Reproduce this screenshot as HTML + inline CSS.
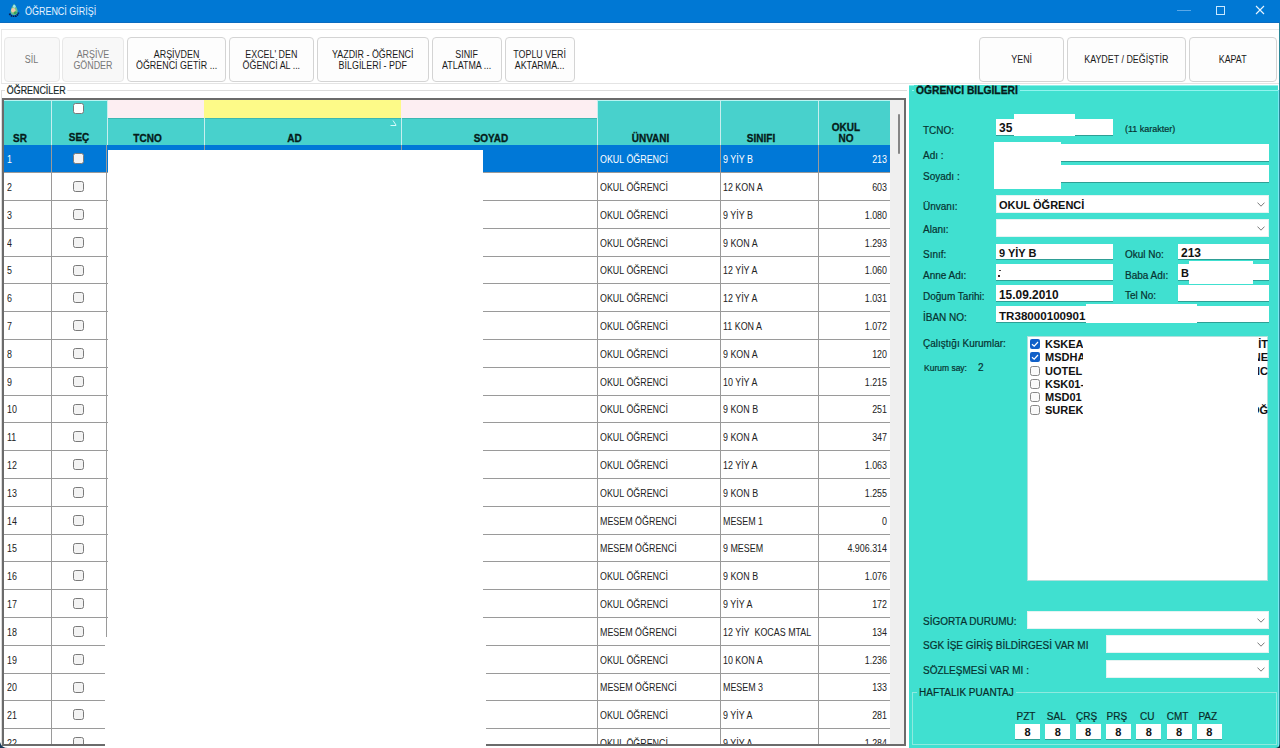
<!DOCTYPE html><html><head><meta charset="utf-8"><style>
*{margin:0;padding:0;box-sizing:border-box}
html,body{width:1280px;height:748px;overflow:hidden;background:#fff;font-family:"Liberation Sans",sans-serif;position:relative}
.a{position:absolute}
#title{left:0;top:0;width:1280px;height:23px;background:#0078d4}
#title .t{left:25px;top:5.5px;color:#e6f3ff;font-size:10.3px;white-space:nowrap;transform:scaleX(0.87);transform-origin:0 0}
.btn span{display:block;transform:scaleX(0.89)}
.btn{position:absolute;top:37px;height:45px;border:1px solid #d4d4d4;border-radius:4px;background:#fdfdfd;color:#1a1a1a;font-size:10px;line-height:11px;display:flex;align-items:center;justify-content:center;text-align:center;white-space:nowrap}
.btn.dis{color:#777;border-color:#e8e8e8;background:#f8f8f8}
.lbl{position:absolute;white-space:nowrap;font-size:10px;color:#073330;line-height:12px;-webkit-text-stroke:0.2px #073330}
.tb{position:absolute;background:#fff;border-bottom:1.5px solid #2e9f95}
.cb{position:absolute;background:#fff;border-bottom:1px solid #2aa79b}
.chev{position:absolute;width:6px;height:6px;border-right:1px solid #555;border-bottom:1px solid #555;transform:rotate(45deg)}
.cell{position:absolute;font-size:10px;color:#222;white-space:nowrap;line-height:12px;transform:scaleX(0.89);transform-origin:0 0}
.cell.r{transform-origin:100% 0}
.hl{position:absolute;background:#9a9a9a}
.chk{position:absolute;width:11px;height:11px;border:1px solid #7a7a7a;border-radius:2.5px;background:#f3f3f3}
.hdr{position:absolute;font-weight:bold;font-size:10px;color:#051c1a;-webkit-text-stroke:0.3px #051c1a;text-align:center;line-height:11px;white-space:nowrap}
</style></head><body>
<div id="title" class="a">
<svg class="a" style="left:8px;top:3px" width="12" height="14" viewBox="0 0 12 14"><path d="M1.5 10.5Q3 13.5 6 13.5Q9.5 13.5 10.5 9.5" stroke="#0a1a50" stroke-width="1.8" fill="none" stroke-dasharray="1.6 0.6"/><path d="M6 0.8Q9.8 5.5 9.6 8.6Q9.2 12 6 12Q2.6 12 2.6 8.6Q2.6 5.5 6 0.8Z" fill="#6cc08a"/><ellipse cx="5.3" cy="7.3" rx="2.2" ry="2.4" fill="#f0c8a8"/><ellipse cx="6.3" cy="3.3" rx="1.3" ry="1.6" fill="#9be4f4"/><ellipse cx="7.2" cy="9.8" rx="1.6" ry="1.4" fill="#3aa45a"/></svg>
<div class="a t">ÖĞRENCİ GİRİŞİ</div>
<div class="a" style="left:0;top:22px;width:1280px;height:1px;background:#0a6cc0"></div>
<div class="a" style="left:1177px;top:10px;width:14px;height:1px;background:#5aa8e8"></div>
<div class="a" style="left:1216px;top:6px;width:9px;height:9px;border:1px solid #c8e8ff"></div>
<svg class="a" style="left:1255px;top:5px" width="10" height="10" viewBox="0 0 10 10"><path d="M1 1L9 9M9 1L1 9" stroke="#e8f4ff" stroke-width="1.1"/></svg>
</div>
<div class="a" style="left:1px;top:29px;width:1279px;height:55px;border-top:1px solid #e8e8e8;border-left:1px solid #e8e8e8;border-bottom:1px solid #e4e4e4"></div>
<div class="btn dis" style="left:4px;width:56px"><span>SİL</span></div>
<div class="btn dis" style="left:62px;width:62px"><span>ARŞİVE<br>GÖNDER</span></div>
<div class="btn" style="left:127px;width:99px"><span>ARŞİVDEN<br>ÖĞRENCİ GETİR ...</span></div>
<div class="btn" style="left:229px;width:85px"><span>EXCEL' DEN<br>ÖĞENCİ AL ...</span></div>
<div class="btn" style="left:317px;width:112px"><span>YAZDIR - ÖĞRENCİ<br>BİLGİLERİ - PDF</span></div>
<div class="btn" style="left:432px;width:70px"><span>SINIF<br>ATLATMA ...</span></div>
<div class="btn" style="left:505px;width:70px"><span>TOPLU VERİ<br>AKTARMA...</span></div>
<div class="btn" style="left:979px;width:85px"><span>YENİ</span></div>
<div class="btn" style="left:1067px;width:119px"><span>KAYDET / DEĞİŞTİR</span></div>
<div class="btn" style="left:1189px;width:88px"><span>KAPAT</span></div>
<div class="a" style="left:1px;top:90px;width:906px;height:658px;border-top:1px solid #dcdcdc;border-left:1px solid #dcdcdc"></div>
<div class="lbl" style="left:5px;top:85px;background:#fff;padding:0 2px;font-size:10px;color:#222;transform:scaleX(0.89);transform-origin:0 0">ÖĞRENCİLER</div>
<div class="a" style="left:2px;top:98px;width:904px;height:648px;border:2px solid #6b6b6b;background:#fff;overflow:hidden">
<div class="a" style="left:0;top:0;width:886px;height:45px;background:#48d1cc"></div>
<div class="a" style="left:103px;top:0;width:97px;height:18px;background:#fdeef2"></div>
<div class="a" style="left:200px;top:0;width:197px;height:18px;background:#fdfa88"></div>
<div class="a" style="left:397px;top:0;width:196px;height:18px;background:#fdeef2"></div>
<div class="a" style="left:103px;top:18px;width:490px;height:1px;background:#3cb8b2"></div>
<div class="a" style="left:0;top:0;width:103px;height:1px;background:#b8f4f2"></div>
<div class="a" style="left:593px;top:0;width:293px;height:1px;background:#b8f4f2"></div>
<div class="a" style="left:47px;top:0px;width:1px;height:45px;background:#c8eeee"></div>
<div class="a" style="left:103px;top:0px;width:1px;height:45px;background:#c8eeee"></div>
<div class="a" style="left:200px;top:18px;width:1px;height:27px;background:#c8eeee"></div>
<div class="a" style="left:397px;top:18px;width:1px;height:27px;background:#c8eeee"></div>
<div class="a" style="left:593px;top:0px;width:1px;height:45px;background:#c8eeee"></div>
<div class="a" style="left:716px;top:0px;width:1px;height:45px;background:#c8eeee"></div>
<div class="a" style="left:814px;top:0px;width:1px;height:45px;background:#c8eeee"></div>
<div class="hdr" style="left:9px;top:33px">SR</div>
<div class="hdr" style="left:47px;width:56px;top:32px">SEÇ</div>
<div class="hdr" style="left:95px;width:97px;top:33px">TCNO</div>
<div class="hdr" style="left:192px;width:197px;top:33px">AD</div>
<div class="hdr" style="left:389px;width:196px;top:33px">SOYAD</div>
<div class="hdr" style="left:585px;width:123px;top:33px">ÜNVANI</div>
<div class="hdr" style="left:708px;width:98px;top:33px">SINIFI</div>
<div class="hdr" style="left:806px;width:72px;top:22px">OKUL<br>NO</div>
<div class="chk" style="left:69px;top:3px;background:#fff"></div>
<svg class="a" style="left:385px;top:19px" width="9" height="8" viewBox="0 0 9 8"><path d="M1.5 6.5L7 6.5M4 1.5L7.2 6.3" stroke="#e8ffff" stroke-width="1" fill="none" opacity="0.9"/></svg>
<div class="a" style="left:0;top:45px;width:886px;height:27.19999999999999px;background:#0078d7"></div>
<div class="cell" style="left:2.5px;top:54.0px;color:#fff">1</div>
<div class="chk" style="left:69px;top:53.099999999999994px"></div>
<div class="cell" style="left:596px;top:54.0px;color:#fff">OKUL ÖĞRENCİ</div>
<div class="cell" style="left:719px;top:54.0px;color:#fff">9 YİY B</div>
<div class="cell r" style="left:814px;width:69px;text-align:right;top:54.0px;color:#fff">213</div>
<div class="hl" style="left:0;top:72.19999999999999px;width:886px;height:1px"></div>
<div class="cell" style="left:2.5px;top:82.0px;color:#222">2</div>
<div class="chk" style="left:69px;top:81.1px"></div>
<div class="cell" style="left:596px;top:82.0px;color:#222">OKUL ÖĞRENCİ</div>
<div class="cell" style="left:719px;top:82.0px;color:#222">12 KON A</div>
<div class="cell r" style="left:814px;width:69px;text-align:right;top:82.0px;color:#222">603</div>
<div class="hl" style="left:0;top:100.0px;width:886px;height:1px"></div>
<div class="cell" style="left:2.5px;top:109.79999999999998px;color:#222">3</div>
<div class="chk" style="left:69px;top:108.89999999999998px"></div>
<div class="cell" style="left:596px;top:109.79999999999998px;color:#222">OKUL ÖĞRENCİ</div>
<div class="cell" style="left:719px;top:109.79999999999998px;color:#222">9 YİY B</div>
<div class="cell r" style="left:814px;width:69px;text-align:right;top:109.79999999999998px;color:#222">1.080</div>
<div class="hl" style="left:0;top:127.79999999999998px;width:886px;height:1px"></div>
<div class="cell" style="left:2.5px;top:137.6px;color:#222">4</div>
<div class="chk" style="left:69px;top:136.7px"></div>
<div class="cell" style="left:596px;top:137.6px;color:#222">OKUL ÖĞRENCİ</div>
<div class="cell" style="left:719px;top:137.6px;color:#222">9 KON A</div>
<div class="cell r" style="left:814px;width:69px;text-align:right;top:137.6px;color:#222">1.293</div>
<div class="hl" style="left:0;top:155.6px;width:886px;height:1px"></div>
<div class="cell" style="left:2.5px;top:165.39999999999998px;color:#222">5</div>
<div class="chk" style="left:69px;top:164.5px"></div>
<div class="cell" style="left:596px;top:165.39999999999998px;color:#222">OKUL ÖĞRENCİ</div>
<div class="cell" style="left:719px;top:165.39999999999998px;color:#222">12 YİY A</div>
<div class="cell r" style="left:814px;width:69px;text-align:right;top:165.39999999999998px;color:#222">1.060</div>
<div class="hl" style="left:0;top:183.39999999999998px;width:886px;height:1px"></div>
<div class="cell" style="left:2.5px;top:193.19999999999993px;color:#222">6</div>
<div class="chk" style="left:69px;top:192.29999999999995px"></div>
<div class="cell" style="left:596px;top:193.19999999999993px;color:#222">OKUL ÖĞRENCİ</div>
<div class="cell" style="left:719px;top:193.19999999999993px;color:#222">12 YİY A</div>
<div class="cell r" style="left:814px;width:69px;text-align:right;top:193.19999999999993px;color:#222">1.031</div>
<div class="hl" style="left:0;top:211.2px;width:886px;height:1px"></div>
<div class="cell" style="left:2.5px;top:221.0px;color:#222">7</div>
<div class="chk" style="left:69px;top:220.10000000000002px"></div>
<div class="cell" style="left:596px;top:221.0px;color:#222">OKUL ÖĞRENCİ</div>
<div class="cell" style="left:719px;top:221.0px;color:#222">11 KON A</div>
<div class="cell r" style="left:814px;width:69px;text-align:right;top:221.0px;color:#222">1.072</div>
<div class="hl" style="left:0;top:239.0px;width:886px;height:1px"></div>
<div class="cell" style="left:2.5px;top:248.79999999999995px;color:#222">8</div>
<div class="chk" style="left:69px;top:247.89999999999998px"></div>
<div class="cell" style="left:596px;top:248.79999999999995px;color:#222">OKUL ÖĞRENCİ</div>
<div class="cell" style="left:719px;top:248.79999999999995px;color:#222">9 KON A</div>
<div class="cell r" style="left:814px;width:69px;text-align:right;top:248.79999999999995px;color:#222">120</div>
<div class="hl" style="left:0;top:266.79999999999995px;width:886px;height:1px"></div>
<div class="cell" style="left:2.5px;top:276.59999999999997px;color:#222">9</div>
<div class="chk" style="left:69px;top:275.7px"></div>
<div class="cell" style="left:596px;top:276.59999999999997px;color:#222">OKUL ÖĞRENCİ</div>
<div class="cell" style="left:719px;top:276.59999999999997px;color:#222">10 YİY A</div>
<div class="cell r" style="left:814px;width:69px;text-align:right;top:276.59999999999997px;color:#222">1.215</div>
<div class="hl" style="left:0;top:294.6px;width:886px;height:1px"></div>
<div class="cell" style="left:2.5px;top:304.4px;color:#222">10</div>
<div class="chk" style="left:69px;top:303.5px"></div>
<div class="cell" style="left:596px;top:304.4px;color:#222">OKUL ÖĞRENCİ</div>
<div class="cell" style="left:719px;top:304.4px;color:#222">9 KON B</div>
<div class="cell r" style="left:814px;width:69px;text-align:right;top:304.4px;color:#222">251</div>
<div class="hl" style="left:0;top:322.4px;width:886px;height:1px"></div>
<div class="cell" style="left:2.5px;top:332.19999999999993px;color:#222">11</div>
<div class="chk" style="left:69px;top:331.29999999999995px"></div>
<div class="cell" style="left:596px;top:332.19999999999993px;color:#222">OKUL ÖĞRENCİ</div>
<div class="cell" style="left:719px;top:332.19999999999993px;color:#222">9 KON A</div>
<div class="cell r" style="left:814px;width:69px;text-align:right;top:332.19999999999993px;color:#222">347</div>
<div class="hl" style="left:0;top:350.2px;width:886px;height:1px"></div>
<div class="cell" style="left:2.5px;top:360.0px;color:#222">12</div>
<div class="chk" style="left:69px;top:359.1px"></div>
<div class="cell" style="left:596px;top:360.0px;color:#222">OKUL ÖĞRENCİ</div>
<div class="cell" style="left:719px;top:360.0px;color:#222">12 YİY A</div>
<div class="cell r" style="left:814px;width:69px;text-align:right;top:360.0px;color:#222">1.063</div>
<div class="hl" style="left:0;top:378.0px;width:886px;height:1px"></div>
<div class="cell" style="left:2.5px;top:387.79999999999995px;color:#222">13</div>
<div class="chk" style="left:69px;top:386.9px"></div>
<div class="cell" style="left:596px;top:387.79999999999995px;color:#222">OKUL ÖĞRENCİ</div>
<div class="cell" style="left:719px;top:387.79999999999995px;color:#222">9 KON B</div>
<div class="cell r" style="left:814px;width:69px;text-align:right;top:387.79999999999995px;color:#222">1.255</div>
<div class="hl" style="left:0;top:405.8px;width:886px;height:1px"></div>
<div class="cell" style="left:2.5px;top:415.6px;color:#222">14</div>
<div class="chk" style="left:69px;top:414.70000000000005px"></div>
<div class="cell" style="left:596px;top:415.6px;color:#222">MESEM ÖĞRENCİ</div>
<div class="cell" style="left:719px;top:415.6px;color:#222">MESEM 1</div>
<div class="cell r" style="left:814px;width:69px;text-align:right;top:415.6px;color:#222">0</div>
<div class="hl" style="left:0;top:433.6px;width:886px;height:1px"></div>
<div class="cell" style="left:2.5px;top:443.4px;color:#222">15</div>
<div class="chk" style="left:69px;top:442.5px"></div>
<div class="cell" style="left:596px;top:443.4px;color:#222">MESEM ÖĞRENCİ</div>
<div class="cell" style="left:719px;top:443.4px;color:#222">9 MESEM</div>
<div class="cell r" style="left:814px;width:69px;text-align:right;top:443.4px;color:#222">4.906.314</div>
<div class="hl" style="left:0;top:461.4px;width:886px;height:1px"></div>
<div class="cell" style="left:2.5px;top:471.19999999999993px;color:#222">16</div>
<div class="chk" style="left:69px;top:470.29999999999995px"></div>
<div class="cell" style="left:596px;top:471.19999999999993px;color:#222">OKUL ÖĞRENCİ</div>
<div class="cell" style="left:719px;top:471.19999999999993px;color:#222">9 KON B</div>
<div class="cell r" style="left:814px;width:69px;text-align:right;top:471.19999999999993px;color:#222">1.076</div>
<div class="hl" style="left:0;top:489.20000000000005px;width:886px;height:1px"></div>
<div class="cell" style="left:2.5px;top:499.0px;color:#222">17</div>
<div class="chk" style="left:69px;top:498.1px"></div>
<div class="cell" style="left:596px;top:499.0px;color:#222">OKUL ÖĞRENCİ</div>
<div class="cell" style="left:719px;top:499.0px;color:#222">9 YİY A</div>
<div class="cell r" style="left:814px;width:69px;text-align:right;top:499.0px;color:#222">172</div>
<div class="hl" style="left:0;top:517.0px;width:886px;height:1px"></div>
<div class="cell" style="left:2.5px;top:526.8px;color:#222">18</div>
<div class="chk" style="left:69px;top:525.9px"></div>
<div class="cell" style="left:596px;top:526.8px;color:#222">MESEM ÖĞRENCİ</div>
<div class="cell" style="left:719px;top:526.8px;color:#222">12 YİY&nbsp; KOCAS MTAL</div>
<div class="cell r" style="left:814px;width:69px;text-align:right;top:526.8px;color:#222">134</div>
<div class="hl" style="left:0;top:544.8px;width:886px;height:1px"></div>
<div class="cell" style="left:2.5px;top:554.6px;color:#222">19</div>
<div class="chk" style="left:69px;top:553.7px"></div>
<div class="cell" style="left:596px;top:554.6px;color:#222">OKUL ÖĞRENCİ</div>
<div class="cell" style="left:719px;top:554.6px;color:#222">10 KON A</div>
<div class="cell r" style="left:814px;width:69px;text-align:right;top:554.6px;color:#222">1.236</div>
<div class="hl" style="left:0;top:572.6px;width:886px;height:1px"></div>
<div class="cell" style="left:2.5px;top:582.4px;color:#222">20</div>
<div class="chk" style="left:69px;top:581.5px"></div>
<div class="cell" style="left:596px;top:582.4px;color:#222">MESEM ÖĞRENCİ</div>
<div class="cell" style="left:719px;top:582.4px;color:#222">MESEM 3</div>
<div class="cell r" style="left:814px;width:69px;text-align:right;top:582.4px;color:#222">133</div>
<div class="hl" style="left:0;top:600.4000000000001px;width:886px;height:1px"></div>
<div class="cell" style="left:2.5px;top:610.2px;color:#222">21</div>
<div class="chk" style="left:69px;top:609.3000000000001px"></div>
<div class="cell" style="left:596px;top:610.2px;color:#222">OKUL ÖĞRENCİ</div>
<div class="cell" style="left:719px;top:610.2px;color:#222">9 YİY A</div>
<div class="cell r" style="left:814px;width:69px;text-align:right;top:610.2px;color:#222">281</div>
<div class="hl" style="left:0;top:628.2px;width:886px;height:1px"></div>
<div class="cell" style="left:2.5px;top:638.0px;color:#222">22</div>
<div class="chk" style="left:69px;top:637.1px"></div>
<div class="cell" style="left:596px;top:638.0px;color:#222">OKUL ÖĞRENCİ</div>
<div class="cell" style="left:719px;top:638.0px;color:#222">9 YİY A</div>
<div class="cell r" style="left:814px;width:69px;text-align:right;top:638.0px;color:#222">1.284</div>
<div class="hl" style="left:0;top:656.0px;width:886px;height:1px"></div>
<div class="hl" style="left:47px;top:45px;width:1px;height:700px"></div>
<div class="hl" style="left:102px;top:45px;width:1px;height:700px"></div>
<div class="hl" style="left:200px;top:45px;width:1px;height:700px"></div>
<div class="hl" style="left:397px;top:45px;width:1px;height:700px"></div>
<div class="hl" style="left:593px;top:45px;width:1px;height:700px"></div>
<div class="hl" style="left:716px;top:45px;width:1px;height:700px"></div>
<div class="hl" style="left:814px;top:45px;width:1px;height:700px"></div>
<div class="a" style="left:886px;top:0;width:15px;height:700px;background:#efefef"></div>
<div class="a" style="left:894px;top:14px;width:2px;height:40px;background:#868686;border-radius:1px"></div>
</div>
<div class="a" style="left:108px;top:150px;width:375px;height:487px;background:#fff"></div>
<div class="a" style="left:105px;top:637px;width:381px;height:111px;background:#fff"></div>
<div class="a" style="left:909px;top:85px;width:369px;height:663px;background:#40e0d0"></div>
<div class="a" style="left:1279px;top:23px;width:1px;height:725px;background:#2b8696"></div>
<div class="a" style="left:1278px;top:90px;width:1px;height:658px;background:#7ae8f2"></div>
<div class="a" style="left:909px;top:85px;width:369px;height:1px;background:#8ff0ea"></div>
<div class="a" style="left:912px;top:90px;width:366px;height:1px;background:#90f4ee"></div>
<div class="lbl" style="left:914px;top:85px;height:12px;overflow:hidden;font-weight:bold;color:#051c1a;-webkit-text-stroke:0.3px #051c1a;background:#40e0d0;padding:0 2px;font-size:10.3px">ÖĞRENCİ BİLGİLERİ</div>
<div class="lbl" style="left:923px;top:124.5px;font-size:10px;">TCNO:</div>
<div class="tb" style="left:996px;top:119px;width:117px;height:17px"></div>
<div class="a" style="left:999px;top:122px;font-size:12px;font-weight:bold;color:#111;white-space:nowrap;line-height:13px">35</div>
<div class="a" style="left:1014px;top:114px;width:61px;height:22px;background:#fff"></div>
<div class="lbl" style="left:1125px;top:122.5px;font-size:9px;">(11 karakter)</div>
<div class="lbl" style="left:923px;top:149.5px;font-size:10px;">Adı :</div>
<div class="tb" style="left:996px;top:144px;width:273px;height:18px"></div>
<div class="lbl" style="left:923px;top:170.5px;font-size:10px;">Soyadı :</div>
<div class="tb" style="left:996px;top:165px;width:273px;height:18px"></div>
<div class="a" style="left:994px;top:142px;width:67px;height:47px;background:#fff"></div>
<div class="lbl" style="left:923px;top:200.5px;font-size:10px;">Ünvanı:</div>
<div class="a" style="left:996px;top:195px;width:273px;height:18px;background:#fff;border:1px solid #e4f4f2"></div>
<div class="a" style="left:999px;top:199px;font-size:11px;font-weight:bold;color:#111;white-space:nowrap;line-height:13px">OKUL ÖĞRENCİ</div>
<svg class="a" style="left:1257px;top:201.5px" width="8" height="5" viewBox="0 0 8 5"><path d="M0.5 0.6L4 4.2L7.5 0.6" stroke="#7a7a7a" stroke-width="1" fill="none"/></svg>
<div class="lbl" style="left:923px;top:223.5px;font-size:10px;">Alanı:</div>
<div class="a" style="left:996px;top:219px;width:273px;height:18px;background:#fff;border:1px solid #e4f4f2"></div>
<svg class="a" style="left:1257px;top:225.5px" width="8" height="5" viewBox="0 0 8 5"><path d="M0.5 0.6L4 4.2L7.5 0.6" stroke="#7a7a7a" stroke-width="1" fill="none"/></svg>
<div class="lbl" style="left:923px;top:248.5px;font-size:10px;">Sınıf:</div>
<div class="tb" style="left:996px;top:244px;width:117px;height:16px"></div>
<div class="a" style="left:999px;top:247px;font-size:11px;font-weight:bold;color:#111;white-space:nowrap;line-height:13px">9 YİY B</div>
<div class="lbl" style="left:1125px;top:248.5px;font-size:10px;">Okul No:</div>
<div class="tb" style="left:1178px;top:244px;width:91px;height:16px"></div>
<div class="a" style="left:1181px;top:247px;font-size:12px;font-weight:bold;color:#111;white-space:nowrap;line-height:13px">213</div>
<div class="lbl" style="left:923px;top:269.5px;font-size:10px;">Anne Adı:</div>
<div class="tb" style="left:996px;top:264px;width:117px;height:17px"></div>
<div class="a" style="left:999px;top:270px;width:2px;height:1px;background:#444"></div>
<div class="a" style="left:998px;top:275px;width:2px;height:2px;background:#3a2a2a"></div>
<div class="lbl" style="left:1125px;top:269.5px;font-size:10px;">Baba Adı:</div>
<div class="tb" style="left:1178px;top:264px;width:91px;height:17px"></div>
<div class="a" style="left:1181px;top:267px;font-size:11px;font-weight:bold;color:#111;white-space:nowrap;line-height:13px">B</div>
<div class="a" style="left:1189px;top:261px;width:64px;height:23px;background:#fff"></div>
<div class="lbl" style="left:923px;top:290.5px;font-size:10px;">Doğum Tarihi:</div>
<div class="tb" style="left:996px;top:285px;width:117px;height:17px"></div>
<div class="a" style="left:999px;top:289px;font-size:11.9px;font-weight:bold;color:#111;white-space:nowrap;line-height:13px">15.09.2010</div>
<div class="lbl" style="left:923px;top:289.5px;font-size:10px;"></div>
<div class="lbl" style="left:1125px;top:289.5px;font-size:10px;">Tel No:</div>
<div class="tb" style="left:1178px;top:285px;width:91px;height:17px"></div>
<div class="lbl" style="left:923px;top:311.5px;font-size:10px;">İBAN NO:</div>
<div class="tb" style="left:996px;top:306px;width:273px;height:17px"></div>
<div class="a" style="left:999px;top:309px;font-size:11.6px;font-weight:bold;color:#111;white-space:nowrap;line-height:13px">TR38000100901</div>
<div class="a" style="left:1086px;top:304px;width:111px;height:19px;background:#fff"></div>
<div class="lbl" style="left:923px;top:337.5px;font-size:10px;">Çalıştığı Kurumlar:</div>
<div class="lbl" style="left:924px;top:361.5px;font-size:8.5px;">Kurum say:</div>
<div class="lbl" style="left:978px;top:361.5px;font-size:10px;">2</div>
<div class="a" style="left:1027px;top:336px;width:241px;height:245px;background:#fff;border:1px solid #b0e0dc"></div>
<div class="a" style="left:1030px;top:339.0px;width:10px;height:10px;border-radius:2px;background:#1060c8"><svg width="10" height="10" viewBox="0 0 10 10" style="position:absolute;left:0;top:0"><path d="M2 5.2L4.2 7.2L8 3" stroke="#fff" stroke-width="1.2" fill="none"/></svg></div>
<div class="a" style="left:1045px;top:338.0px;font-size:11px;font-weight:bold;color:#111;line-height:13px;white-space:nowrap">KSKEA</div>
<div class="a" style="left:1030px;top:352.25px;width:10px;height:10px;border-radius:2px;background:#1060c8"><svg width="10" height="10" viewBox="0 0 10 10" style="position:absolute;left:0;top:0"><path d="M2 5.2L4.2 7.2L8 3" stroke="#fff" stroke-width="1.2" fill="none"/></svg></div>
<div class="a" style="left:1045px;top:351.25px;font-size:11px;font-weight:bold;color:#111;line-height:13px;white-space:nowrap">MSDHA</div>
<div class="chk" style="left:1030px;top:365.5px;width:10px;height:10px;background:#fafafa;border-color:#888"></div>
<div class="a" style="left:1045px;top:364.5px;font-size:11px;font-weight:bold;color:#111;line-height:13px;white-space:nowrap">UOTEL</div>
<div class="chk" style="left:1030px;top:378.75px;width:10px;height:10px;background:#fafafa;border-color:#888"></div>
<div class="a" style="left:1045px;top:377.75px;font-size:11px;font-weight:bold;color:#111;line-height:13px;white-space:nowrap">KSK01-</div>
<div class="chk" style="left:1030px;top:392.0px;width:10px;height:10px;background:#fafafa;border-color:#888"></div>
<div class="a" style="left:1045px;top:391.0px;font-size:11px;font-weight:bold;color:#111;line-height:13px;white-space:nowrap">MSD01</div>
<div class="chk" style="left:1030px;top:405.25px;width:10px;height:10px;background:#fafafa;border-color:#888"></div>
<div class="a" style="left:1045px;top:404.25px;font-size:11px;font-weight:bold;color:#111;line-height:13px;white-space:nowrap">SUREK</div>
<div class="a" style="left:1083px;top:337px;width:172px;height:90px;background:#fff"></div>
<div class="a" style="left:1258px;width:10px;overflow:hidden;top:338.0px;font-size:11px;font-weight:bold;color:#111;line-height:13px;white-space:nowrap;direction:rtl">İT</div>
<div class="a" style="left:1258px;width:10px;overflow:hidden;top:351.25px;font-size:11px;font-weight:bold;color:#111;line-height:13px;white-space:nowrap;direction:rtl">NE</div>
<div class="a" style="left:1258px;width:10px;overflow:hidden;top:364.5px;font-size:11px;font-weight:bold;color:#111;line-height:13px;white-space:nowrap;direction:rtl">NC</div>
<div class="a" style="left:1258px;width:10px;overflow:hidden;top:404.25px;font-size:11px;font-weight:bold;color:#111;line-height:13px;white-space:nowrap;direction:rtl">ÖĞ</div>
<div class="lbl" style="left:923px;top:615.5px;font-size:10px;">SİGORTA DURUMU:</div>
<div class="a" style="left:1027px;top:611px;width:242px;height:18px;background:#fff;border:1px solid #e4f4f2"></div>
<svg class="a" style="left:1257px;top:617.5px" width="8" height="5" viewBox="0 0 8 5"><path d="M0.5 0.6L4 4.2L7.5 0.6" stroke="#7a7a7a" stroke-width="1" fill="none"/></svg>
<div class="lbl" style="left:923px;top:639.5px;font-size:10px;">SGK İŞE GİRİŞ BİLDİRGESİ VAR MI</div>
<div class="a" style="left:1106px;top:635px;width:163px;height:18px;background:#fff;border:1px solid #e4f4f2"></div>
<svg class="a" style="left:1257px;top:641.5px" width="8" height="5" viewBox="0 0 8 5"><path d="M0.5 0.6L4 4.2L7.5 0.6" stroke="#7a7a7a" stroke-width="1" fill="none"/></svg>
<div class="lbl" style="left:923px;top:664.5px;font-size:10px;">SÖZLEŞMESİ VAR MI :</div>
<div class="a" style="left:1106px;top:660px;width:163px;height:18px;background:#fff;border:1px solid #e4f4f2"></div>
<svg class="a" style="left:1257px;top:666.5px" width="8" height="5" viewBox="0 0 8 5"><path d="M0.5 0.6L4 4.2L7.5 0.6" stroke="#7a7a7a" stroke-width="1" fill="none"/></svg>
<div class="a" style="left:912px;top:692px;width:365px;height:53px;border:1px solid #8eeadf"></div>
<div class="lbl" style="left:917px;top:687px;background:#40e0d0;padding:0 2px;color:#0a2a28">HAFTALIK PUANTAJ</div>
<div class="lbl" style="left:1008.5px;width:35px;text-align:center;top:710.5px;color:#0a2a28">PZT</div>
<div class="tb" style="left:1015.0px;top:724px;width:25px;height:16px"></div>
<div class="a" style="left:1015.0px;width:25px;text-align:center;top:726px;font-size:11px;font-weight:bold;color:#111;line-height:13px">8</div>
<div class="lbl" style="left:1038.8px;width:35px;text-align:center;top:710.5px;color:#0a2a28">SAL</div>
<div class="tb" style="left:1045.3px;top:724px;width:25px;height:16px"></div>
<div class="a" style="left:1045.3px;width:25px;text-align:center;top:726px;font-size:11px;font-weight:bold;color:#111;line-height:13px">8</div>
<div class="lbl" style="left:1069.1px;width:35px;text-align:center;top:710.5px;color:#0a2a28">ÇRŞ</div>
<div class="tb" style="left:1075.6px;top:724px;width:25px;height:16px"></div>
<div class="a" style="left:1075.6px;width:25px;text-align:center;top:726px;font-size:11px;font-weight:bold;color:#111;line-height:13px">8</div>
<div class="lbl" style="left:1099.4px;width:35px;text-align:center;top:710.5px;color:#0a2a28">PRŞ</div>
<div class="tb" style="left:1105.9px;top:724px;width:25px;height:16px"></div>
<div class="a" style="left:1105.9px;width:25px;text-align:center;top:726px;font-size:11px;font-weight:bold;color:#111;line-height:13px">8</div>
<div class="lbl" style="left:1129.7px;width:35px;text-align:center;top:710.5px;color:#0a2a28">CU</div>
<div class="tb" style="left:1136.2px;top:724px;width:25px;height:16px"></div>
<div class="a" style="left:1136.2px;width:25px;text-align:center;top:726px;font-size:11px;font-weight:bold;color:#111;line-height:13px">8</div>
<div class="lbl" style="left:1160.0px;width:35px;text-align:center;top:710.5px;color:#0a2a28">CMT</div>
<div class="tb" style="left:1166.5px;top:724px;width:25px;height:16px"></div>
<div class="a" style="left:1166.5px;width:25px;text-align:center;top:726px;font-size:11px;font-weight:bold;color:#111;line-height:13px">8</div>
<div class="lbl" style="left:1190.3px;width:35px;text-align:center;top:710.5px;color:#0a2a28">PAZ</div>
<div class="tb" style="left:1196.8px;top:724px;width:25px;height:16px"></div>
<div class="a" style="left:1196.8px;width:25px;text-align:center;top:726px;font-size:11px;font-weight:bold;color:#111;line-height:13px">8</div>
<svg class="a" style="left:0;top:740px" width="8" height="8" viewBox="0 0 8 8"><path d="M0 0L0 8L8 8Q1.5 8 0 2Z" fill="#1a3a5a"/></svg>
<svg class="a" style="left:1275px;top:743px" width="5" height="5" viewBox="0 0 5 5"><path d="M5 0L5 5L0 5Q4 5 5 1Z" fill="#0a2a3a"/></svg>
</body></html>
